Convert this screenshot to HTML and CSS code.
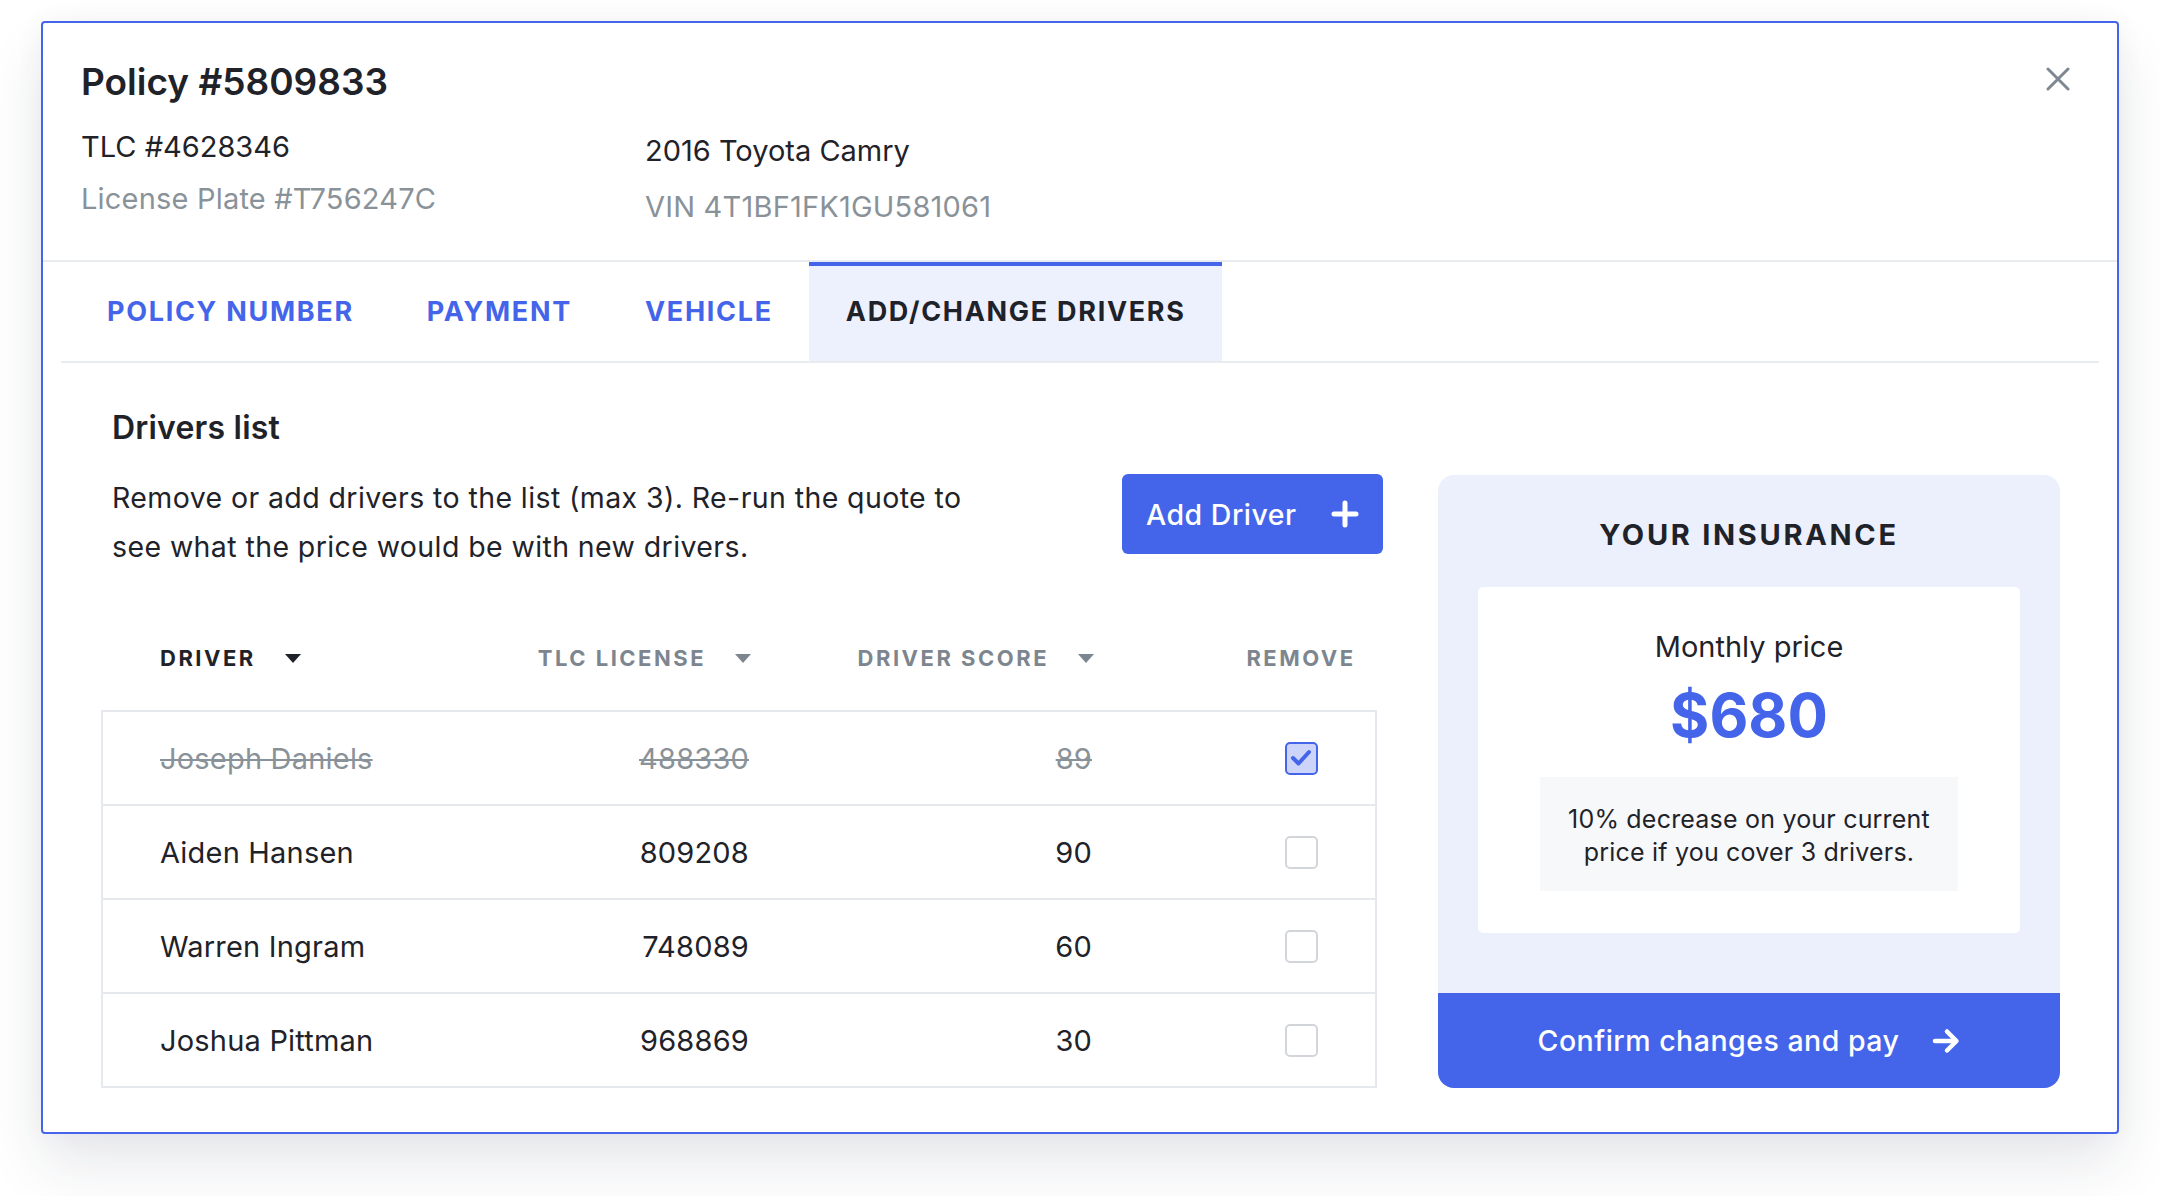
FILE: index.html
```html
<!DOCTYPE html>
<html lang="en">
<head>
<meta charset="utf-8">
<title>Policy #5809833</title>
<link rel="stylesheet" href="styles.css">
</head>
<body>
<div class="modal">
  <header class="modal-header">
    <div class="title-row">
      <h1 class="title">Policy #5809833</h1>
      <button class="close" aria-label="Close">
        <svg width="24" height="24" viewBox="0 0 24 24"><path d="M2 2 L22 22 M22 2 L2 22" stroke="#7f8891" stroke-width="3" stroke-linecap="round" fill="none"/></svg>
      </button>
    </div>
    <div class="info">
      <div class="info-col">
        <div class="info-main">TLC #4628346</div>
        <div class="info-sub">License Plate #T756247C</div>
      </div>
      <div class="info-col info-col-right">
        <div class="info-main">2016 Toyota Camry</div>
        <div class="info-sub">VIN 4T1BF1FK1GU581061</div>
      </div>
    </div>
  </header>

  <nav class="tabs">
    <a class="tab">POLICY NUMBER</a>
    <a class="tab">PAYMENT</a>
    <a class="tab">VEHICLE</a>
    <a class="tab tab-active">ADD/CHANGE DRIVERS</a>
  </nav>

  <main class="content">
    <section class="drivers">
      <h2 class="section-title">Drivers list</h2>
      <div class="intro-row">
        <p class="intro">Remove or add drivers to the list (max 3). Re-run the quote to<br>see what the price would be with new drivers.</p>
        <button class="add-btn">
          <span>Add Driver</span>
          <svg width="28" height="28" viewBox="0 0 28 28"><path d="M14 3 V25 M3 14 H25" stroke="#fff" stroke-width="5" stroke-linecap="round" fill="none"/></svg>
        </button>
      </div>

      <div class="thead">
        <div class="th th-name th-dark">DRIVER<svg class="caret" width="16" height="9" viewBox="0 0 16 9"><path d="M0 0 H16 L8 9 Z" fill="#1f2329"/></svg></div>
        <div class="th th-right">TLC LICENSE<svg class="caret" width="16" height="9" viewBox="0 0 16 9"><path d="M0 0 H16 L8 9 Z" fill="#7d868f"/></svg></div>
        <div class="th th-right">DRIVER SCORE<svg class="caret" width="16" height="9" viewBox="0 0 16 9"><path d="M0 0 H16 L8 9 Z" fill="#7d868f"/></svg></div>
        <div class="th"></div>
        <div class="th th-center">REMOVE</div>
      </div>

      <div class="table">
        <div class="row row-removed">
          <div class="cell cell-name"><span class="struck">Joseph Daniels</span></div>
          <div class="cell cell-right"><span class="struck">488330</span></div>
          <div class="cell cell-right"><span class="struck">89</span></div>
          <div class="cell"></div>
          <div class="cell cell-center"><span class="checkbox checkbox-checked"><svg width="22" height="18" viewBox="0 0 22 18"><path d="M3 9 L8.5 14.5 L19 3" stroke="#4465ea" stroke-width="4" stroke-linecap="round" stroke-linejoin="round" fill="none"/></svg></span></div>
        </div>
        <div class="row">
          <div class="cell cell-name">Aiden Hansen</div>
          <div class="cell cell-right">809208</div>
          <div class="cell cell-right">90</div>
          <div class="cell"></div>
          <div class="cell cell-center"><span class="checkbox"></span></div>
        </div>
        <div class="row">
          <div class="cell cell-name">Warren Ingram</div>
          <div class="cell cell-right">748089</div>
          <div class="cell cell-right">60</div>
          <div class="cell"></div>
          <div class="cell cell-center"><span class="checkbox"></span></div>
        </div>
        <div class="row">
          <div class="cell cell-name">Joshua Pittman</div>
          <div class="cell cell-right">968869</div>
          <div class="cell cell-right">30</div>
          <div class="cell"></div>
          <div class="cell cell-center"><span class="checkbox"></span></div>
        </div>
      </div>
    </section>

    <aside class="card">
      <div class="card-title">YOUR INSURANCE</div>
      <div class="price-box">
        <div class="price-label">Monthly price</div>
        <div class="price">$680</div>
        <div class="note">10% decrease on your current<br>price if you cover 3 drivers.</div>
      </div>
      <button class="confirm">
        <span>Confirm changes and pay</span>
        <svg width="28" height="26" viewBox="0 0 28 26"><path d="M3 13 H24 M15 3.5 L24.5 13 L15 22.5" stroke="#fff" stroke-width="4.5" stroke-linecap="round" stroke-linejoin="round" fill="none"/></svg>
      </button>
    </aside>
  </main>
</div>
</body>
</html>
```
FILE: styles.css
```css
* { box-sizing: border-box; }

html { background: #ffffff; min-height: 100%; }

body {
  margin: 0;
  min-height: 1196px;
  padding: 21px 41px 0;
  font-family: Inter, Lato, "Noto Sans", sans-serif;
  color: #1f2329;
}

button { font-family: inherit; cursor: pointer; }

.modal {
  border: 2px solid #4465ea;
  border-radius: 4px;
  background: #fff;
  box-shadow: 0 32px 58px rgba(30, 40, 70, 0.10), 0 0 30px rgba(30, 40, 70, 0.045);
}

/* Header */
.modal-header {
  height: 239px;
  padding: 37px 38px 0;
  border-bottom: 2px solid #e9ecef;
}

.title-row {
  display: flex;
  align-items: center;
  justify-content: space-between;
}

.title {
  margin: 0;
  font-size: 37px;
  line-height: 44px;
  font-weight: 600;
  letter-spacing: 0;
}

.close {
  margin: -6px 9px 0 0;
  padding: 0;
  border: 0;
  background: none;
  width: 24px;
  height: 24px;
  display: flex;
}

.info {
  display: grid;
  grid-template-columns: 564px auto;
  margin-top: 17px;
}

.info-main { font-size: 29px; line-height: 52px; }
.info-sub { font-size: 29px; line-height: 52px; color: #8a9299; letter-spacing: 0.2px; }

.info-col-right { margin-top: 2px; }
.info-col-right .info-main,
.info-col-right .info-sub { line-height: 56px; }

/* Tabs */
.tabs {
  display: flex;
  height: 101px;
  margin: 0 18px;
  padding-left: 9px;
  border-bottom: 2px solid #e9ecef;
}

.tab {
  padding: 0 36.5px;
  line-height: 100px;
  font-size: 27px;
  font-weight: 700;
  letter-spacing: 1.7px;
  color: #4465ea;
}

.tab:first-child { padding-left: 37px; }

.tab-active {
  background: #edf1fd;
  box-shadow: inset 0 4px 0 #4465ea;
  color: #1f2329;
}

/* Content */
.content {
  display: flex;
  gap: 55px;
  padding: 45px 57px 44px 58px;
}

.drivers {
  flex: none;
  width: 1282px;
}

.section-title {
  margin: 0;
  padding-left: 11px;
  font-size: 32px;
  line-height: 40px;
  font-weight: 600;
  letter-spacing: 0.2px;
}

.intro-row {
  display: flex;
  justify-content: space-between;
  align-items: flex-start;
  margin-top: 25px;
}

.intro {
  margin: 0;
  padding-left: 11px;
  font-size: 28.5px;
  line-height: 49px;
  letter-spacing: 0.4px;
}

.add-btn {
  display: flex;
  align-items: center;
  gap: 34px;
  margin-top: 1px;
  width: 261px;
  height: 80px;
  padding: 0 23px 0 24px;
  border: 0;
  border-radius: 6px;
  background: #4465ea;
  color: #fff;
  font-size: 28.5px;
  font-weight: 500;
  letter-spacing: 0.5px;
}

/* Table */
.thead,
.row {
  display: grid;
  grid-template-columns: 417px 231px 343px 133px 1fr;
}

.thead {
  width: 1276px;
  margin: 62px 0 27px;
  padding: 0 2px;
  line-height: 50px;
  font-size: 22px;
  font-weight: 700;
  letter-spacing: 2.5px;
  color: #7d868f;
}

.th { display: flex; align-items: center; }
.th-dark { color: #1f2329; }
.th-name { padding-left: 57px; }
.th-right { justify-content: flex-end; }
.th-center { justify-content: center; }

.caret { margin-left: 29px; flex: none; }

.table {
  width: 1276px;
  border: 2px solid #e5e8ec;
  border-bottom: 0;
}

.row {
  height: 94px;
  border-bottom: 2px solid #e5e8ec;
  align-items: center;
  font-size: 29px;
  letter-spacing: 0.2px;
}

.cell { display: flex; align-items: center; }
.cell-name { padding-left: 57px; }
.cell-right { justify-content: flex-end; padding-right: 2px; }
.cell-center { justify-content: center; }

.row-removed { color: #8a9299; }
.struck {
  text-decoration: line-through;
  text-decoration-thickness: 2px;
}

.checkbox {
  display: flex;
  align-items: center;
  justify-content: center;
  width: 33px;
  height: 33px;
  border: 2px solid #d2d6db;
  border-radius: 5px;
  background: #fff;
}

.checkbox-checked {
  border-color: #4465ea;
  background: #ccd5f9;
}

/* Card */
.card {
  flex: none;
  width: 622px;
  margin-top: 67px;
  display: flex;
  flex-direction: column;
  background: #ecf0fd;
  border-radius: 16px;
  overflow: hidden;
}

.card-title {
  padding-top: 42px;
  text-align: center;
  font-size: 29px;
  line-height: 36px;
  font-weight: 700;
  letter-spacing: 2.7px;
}

.price-box {
  margin: 34px 40px 0;
  padding: 42px 0;
  display: flex;
  flex-direction: column;
  align-items: center;
  background: #fff;
  border-radius: 5px;
}

.price-label { font-size: 29px; line-height: 36px; }

.price {
  margin-top: 15px;
  font-size: 60px;
  line-height: 70px;
  font-weight: 700;
  color: #4465ea;
}

.note {
  margin-top: 27px;
  width: 418px;
  padding: 26px 0 22px;
  background: #f7f8fa;
  text-align: center;
  font-size: 25px;
  line-height: 33px;
  letter-spacing: 0.2px;
}

.confirm {
  margin-top: auto;
  height: 95px;
  display: flex;
  align-items: center;
  justify-content: center;
  gap: 33px;
  border: 0;
  background: #4465ea;
  color: #fff;
  font-size: 28.5px;
  font-weight: 500;
  letter-spacing: 0.5px;
}
```
